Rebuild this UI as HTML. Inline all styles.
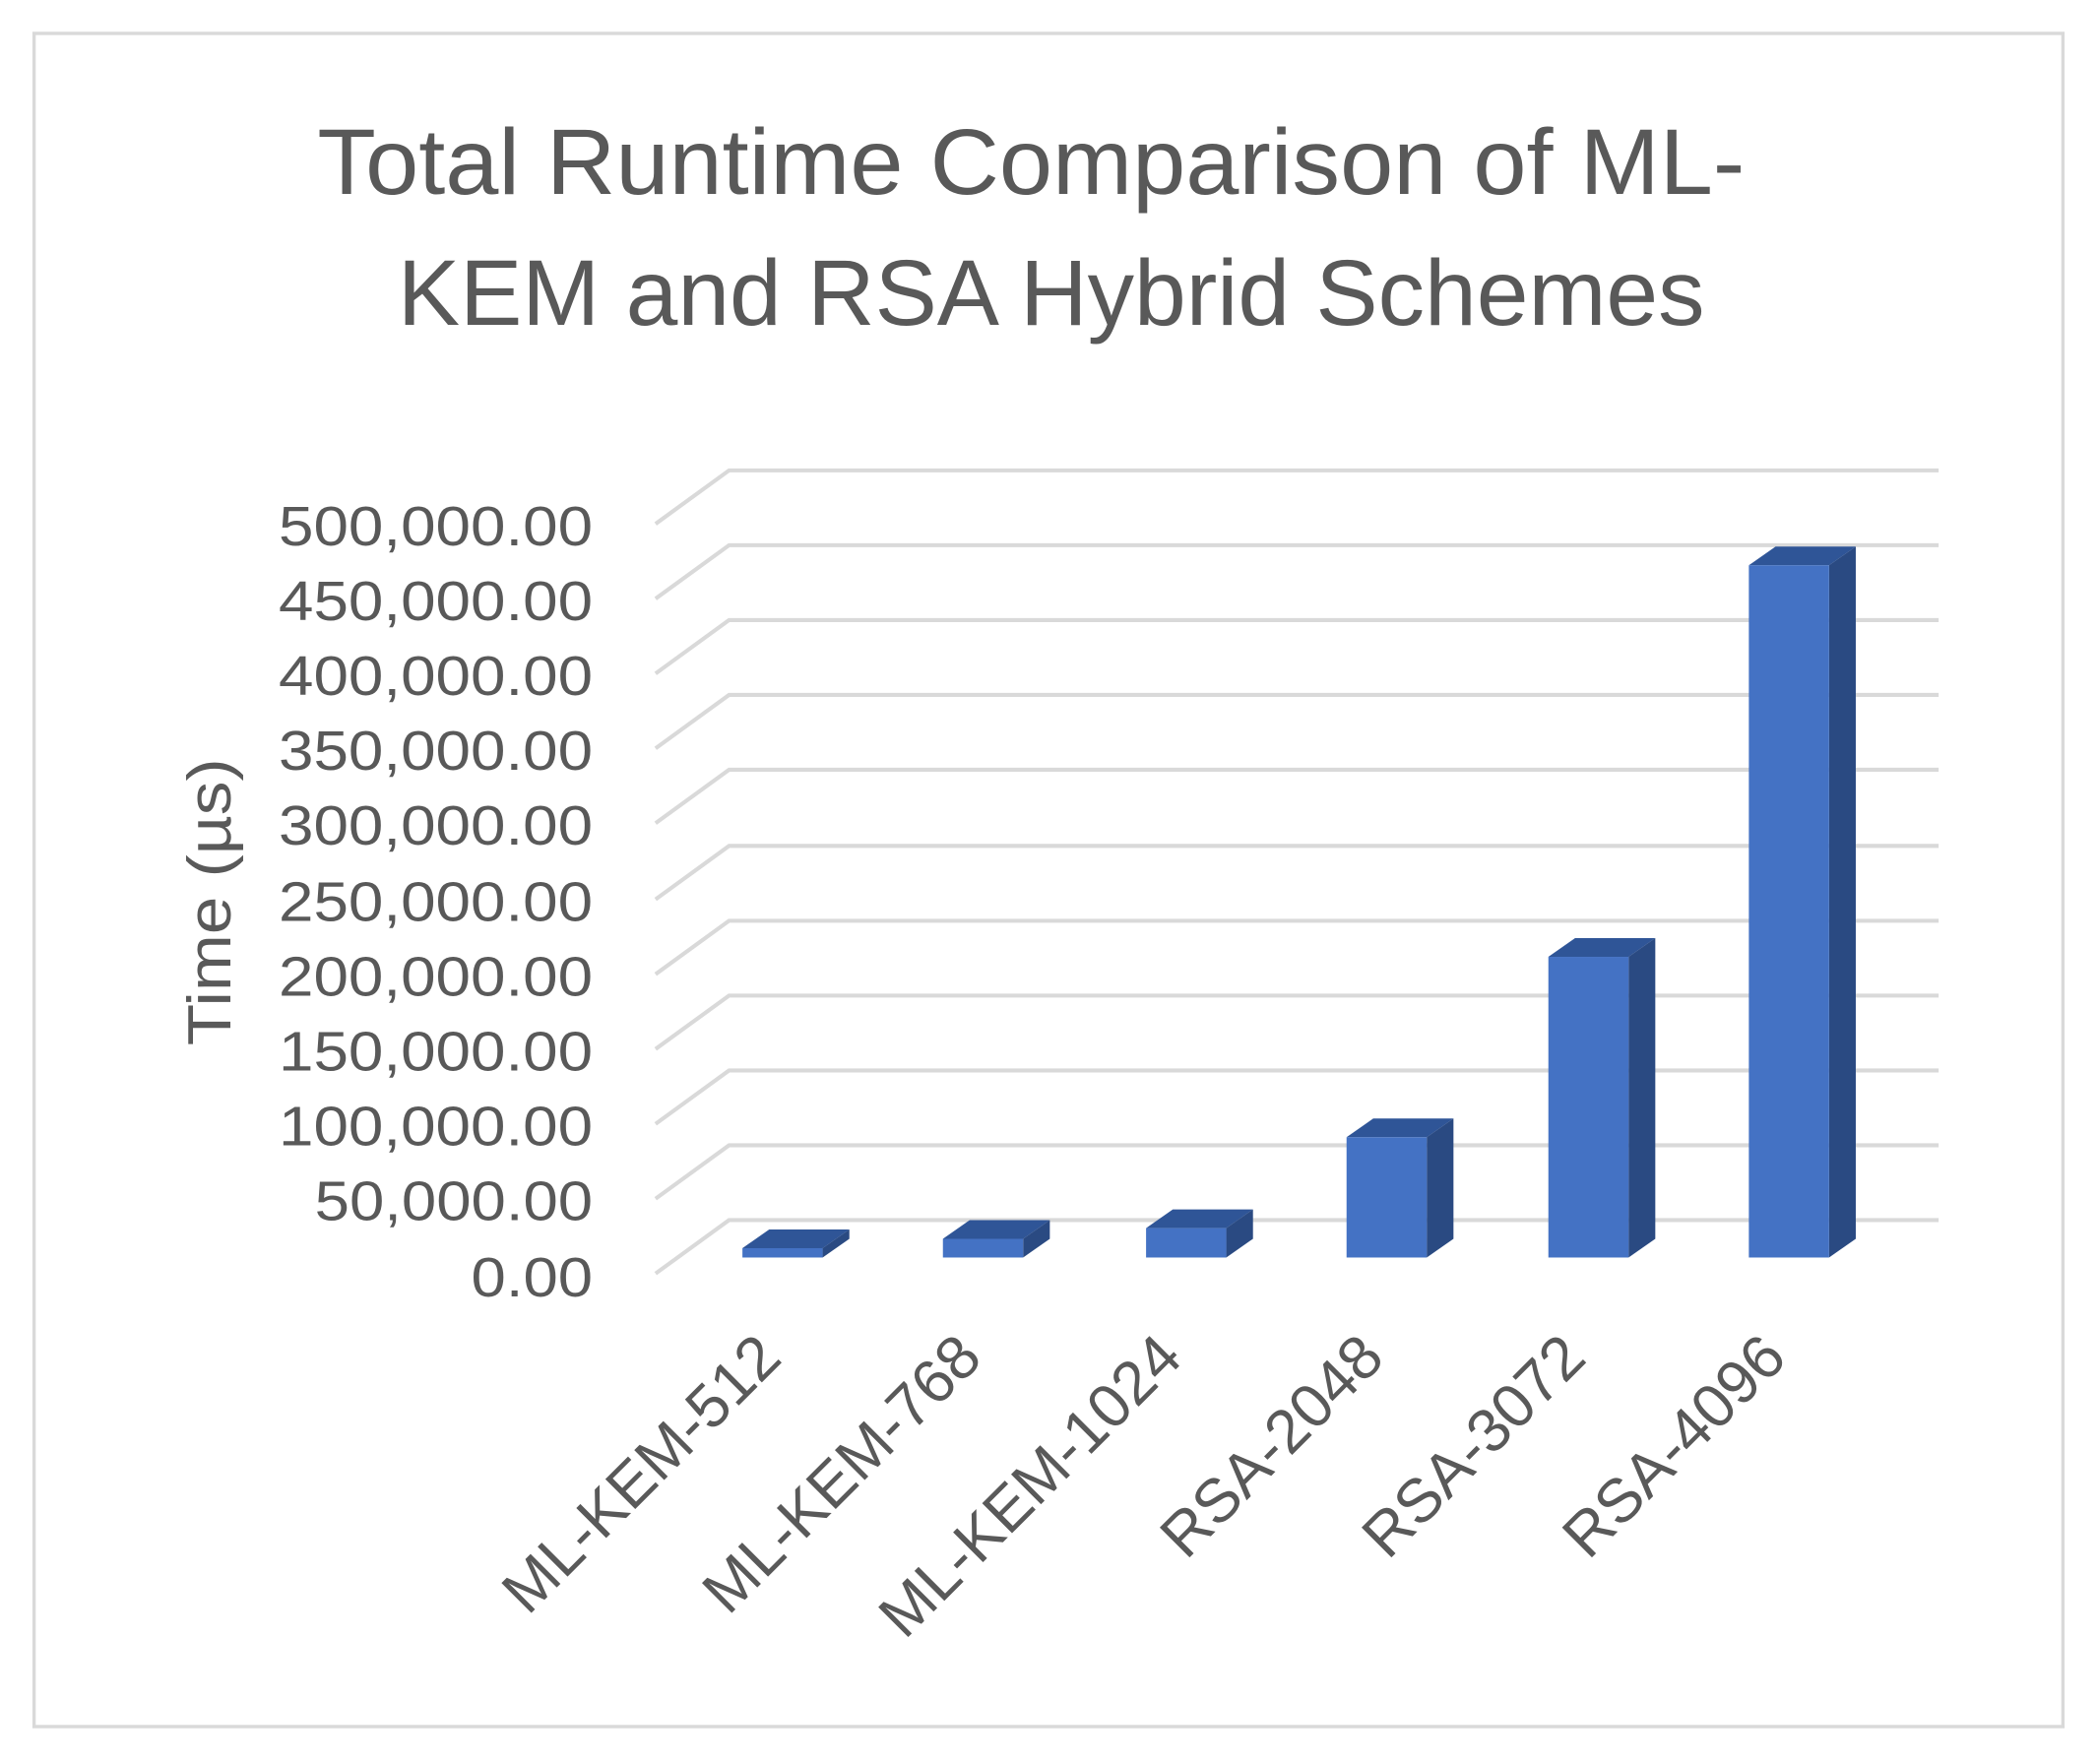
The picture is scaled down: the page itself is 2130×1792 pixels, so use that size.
<!DOCTYPE html>
<html><head><meta charset="utf-8"><style>
html,body{margin:0;padding:0;background:#fff;width:2130px;height:1792px;overflow:hidden}
svg{display:block}
text{font-family:"Liberation Sans",sans-serif;fill:#595959}
</style></head><body>
<svg width="2130" height="1792" viewBox="0 0 1568 1320" xmlns="http://www.w3.org/2000/svg">
<rect x="0" y="0" width="1568" height="1320" fill="#fff"/>
<rect x="25" y="25" width="1518" height="1267" fill="none" stroke="#d9d9d9" stroke-width="2.5"/>
<text x="771" y="145" font-size="70" text-anchor="middle" textLength="1068" lengthAdjust="spacingAndGlyphs">Total Runtime Comparison of ML-</text>
<text x="786" y="243" font-size="70" text-anchor="middle" textLength="978" lengthAdjust="spacingAndGlyphs">KEM and RSA Hybrid Schemes</text>
<g stroke="#d9d9d9" stroke-width="3" fill="none">
<path d="M490 392L545 352H1450M490 448L545 408H1450M490 504L545 464H1450M490 560L545 520H1450M490 616L545 576H1450M490 673L545 633H1450M490 729L545 689H1450M490 785L545 745H1450M490 841L545 801H1450M490 897L545 857H1450M490 953L545 913H1450"/>
</g>
<g font-size="42" text-anchor="end">
<text x="443" y="408" textLength="235" lengthAdjust="spacingAndGlyphs">500,000.00</text>
<text x="443" y="464" textLength="235" lengthAdjust="spacingAndGlyphs">450,000.00</text>
<text x="443" y="520" textLength="235" lengthAdjust="spacingAndGlyphs">400,000.00</text>
<text x="443" y="576" textLength="235" lengthAdjust="spacingAndGlyphs">350,000.00</text>
<text x="443" y="632" textLength="235" lengthAdjust="spacingAndGlyphs">300,000.00</text>
<text x="443" y="689" textLength="235" lengthAdjust="spacingAndGlyphs">250,000.00</text>
<text x="443" y="745" textLength="235" lengthAdjust="spacingAndGlyphs">200,000.00</text>
<text x="443" y="801" textLength="235" lengthAdjust="spacingAndGlyphs">150,000.00</text>
<text x="443" y="857" textLength="235" lengthAdjust="spacingAndGlyphs">100,000.00</text>
<text x="443" y="913" textLength="208" lengthAdjust="spacingAndGlyphs">50,000.00</text>
<text x="443" y="970" textLength="91" lengthAdjust="spacingAndGlyphs">0.00</text>
</g>
<text transform="translate(172,675) rotate(-90)" font-size="46" text-anchor="middle" textLength="215" lengthAdjust="spacingAndGlyphs">Time (µs)</text>
<g>
<g><path d="M555 934h60l20-14h-60z" fill="#2f5597"/><path d="M615 934l20-14v7l-20 14z" fill="#2a4a82"/><rect x="555" y="934" width="60" height="7" fill="#4472c4"/></g>
<g><path d="M705 927h60l20-14h-60z" fill="#2f5597"/><path d="M765 927l20-14v14l-20 14z" fill="#2a4a82"/><rect x="705" y="927" width="60" height="14" fill="#4472c4"/></g>
<g><path d="M857 919h60l20-14h-60z" fill="#2f5597"/><path d="M917 919l20-14v22l-20 14z" fill="#2a4a82"/><rect x="857" y="919" width="60" height="22" fill="#4472c4"/></g>
<g><path d="M1007 851h60l20-14h-60z" fill="#2f5597"/><path d="M1067 851l20-14v90l-20 14z" fill="#2a4a82"/><rect x="1007" y="851" width="60" height="90" fill="#4472c4"/></g>
<g><path d="M1158 716h60l20-14h-60z" fill="#2f5597"/><path d="M1218 716l20-14v225l-20 14z" fill="#2a4a82"/><rect x="1158" y="716" width="60" height="225" fill="#4472c4"/></g>
<g><path d="M1308 423h60l20-14h-60z" fill="#2f5597"/><path d="M1368 423l20-14v518l-20 14z" fill="#2a4a82"/><rect x="1308" y="423" width="60" height="518" fill="#4472c4"/></g>
</g>
<g font-size="46" text-anchor="end">
<text transform="translate(586,1018) rotate(-45)">ML-KEM-512</text>
<text transform="translate(736,1018) rotate(-45)">ML-KEM-768</text>
<text transform="translate(886,1018) rotate(-45)">ML-KEM-1024</text>
<text transform="translate(1037,1018) rotate(-45)">RSA-2048</text>
<text transform="translate(1188,1018) rotate(-45)">RSA-3072</text>
<text transform="translate(1338,1018) rotate(-45)">RSA-4096</text>
</g>
</svg>
</body></html>
